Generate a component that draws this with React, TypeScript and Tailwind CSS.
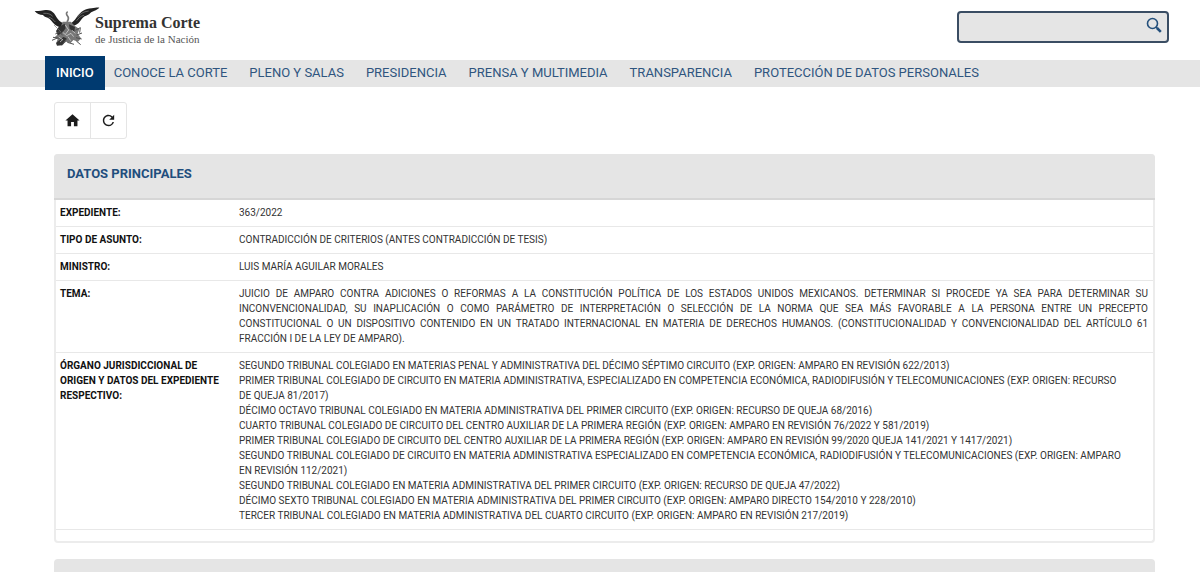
import { MdHome, MdRefresh } from 'react-icons/md';

const menu = [
  'INICIO',
  'CONOCE LA CORTE',
  'PLENO Y SALAS',
  'PRESIDENCIA',
  'PRENSA Y MULTIMEDIA',
  'TRANSPARENCIA',
  'PROTECCIÓN DE DATOS PERSONALES',
];

const tribunales = [
  'SEGUNDO TRIBUNAL COLEGIADO EN MATERIAS PENAL Y ADMINISTRATIVA DEL DÉCIMO SÉPTIMO CIRCUITO (EXP. ORIGEN: AMPARO EN REVISIÓN 622/2013)',
  'PRIMER TRIBUNAL COLEGIADO DE CIRCUITO EN MATERIA ADMINISTRATIVA, ESPECIALIZADO EN COMPETENCIA ECONÓMICA, RADIODIFUSIÓN Y TELECOMUNICACIONES (EXP. ORIGEN: RECURSO DE QUEJA 81/2017)',
  'DÉCIMO OCTAVO TRIBUNAL COLEGIADO EN MATERIA ADMINISTRATIVA DEL PRIMER CIRCUITO (EXP. ORIGEN: RECURSO DE QUEJA 68/2016)',
  'CUARTO TRIBUNAL COLEGIADO DE CIRCUITO DEL CENTRO AUXILIAR DE LA PRIMERA REGIÓN (EXP. ORIGEN: AMPARO EN REVISIÓN 76/2022 Y 581/2019)',
  'PRIMER TRIBUNAL COLEGIADO DE CIRCUITO DEL CENTRO AUXILIAR DE LA PRIMERA REGIÓN (EXP. ORIGEN: AMPARO EN REVISIÓN 99/2020 QUEJA 141/2021 Y 1417/2021)',
  'SEGUNDO TRIBUNAL COLEGIADO DE CIRCUITO EN MATERIA ADMINISTRATIVA ESPECIALIZADO EN COMPETENCIA ECONÓMICA, RADIODIFUSIÓN Y TELECOMUNICACIONES (EXP. ORIGEN: AMPARO EN REVISIÓN 112/2021)',
  'SEGUNDO TRIBUNAL COLEGIADO EN MATERIA ADMINISTRATIVA DEL PRIMER CIRCUITO (EXP. ORIGEN: RECURSO DE QUEJA 47/2022)',
  'DÉCIMO SEXTO TRIBUNAL COLEGIADO EN MATERIA ADMINISTRATIVA DEL PRIMER CIRCUITO (EXP. ORIGEN: AMPARO DIRECTO 154/2010 Y 228/2010)',
  'TERCER TRIBUNAL COLEGIADO EN MATERIA ADMINISTRATIVA DEL CUARTO CIRCUITO (EXP. ORIGEN: AMPARO EN REVISIÓN 217/2019)',
];

// The first lines of the topic break at fixed words
const tema = [
  'JUICIO DE AMPARO CONTRA ADICIONES O REFORMAS A LA CONSTITUCIÓN POLÍTICA DE LOS ESTADOS UNIDOS MEXICANOS. DETERMINAR SI PROCEDE YA SEA PARA DETERMINAR SU',
  'INCONVENCIONALIDAD, SU INAPLICACIÓN O COMO PARÁMETRO DE INTERPRETACIÓN O SELECCIÓN DE LA NORMA QUE SEA MÁS FAVORABLE A LA PERSONA ENTRE UN PRECEPTO',
  'CONSTITUCIONAL O UN DISPOSITIVO CONTENIDO EN UN TRATADO INTERNACIONAL EN MATERIA DE DERECHOS HUMANOS. (CONSTITUCIONALIDAD Y CONVENCIONALIDAD DEL ARTÍCULO 61',
  'FRACCIÓN I DE LA LEY DE AMPARO).',
];

const datos = [
  { label: 'EXPEDIENTE:', value: '363/2022' },
  { label: 'TIPO DE ASUNTO:', value: 'CONTRADICCIÓN DE CRITERIOS (ANTES CONTRADICCIÓN DE TESIS)' },
  { label: 'MINISTRO:', value: 'LUIS MARÍA AGUILAR MORALES' },
  {
    label: 'TEMA:',
    value: (
      <p>
        {tema.map((line) => (
          <span key={line} className="block text-justify not-last:[text-align-last:justify]">
            {line}{' '}
          </span>
        ))}
      </p>
    ),
  },
  {
    label: 'ÓRGANO JURISDICCIONAL DE ORIGEN Y DATOS DEL EXPEDIENTE RESPECTIVO:',
    value: (
      <ul className="pr-5">
        {tribunales.map((t) => (
          <li key={t}>{t}</li>
        ))}
      </ul>
    ),
  },
];

function Eagle() {
  return (
    <svg viewBox="12 16 198 126" className="h-[42px] w-[66px]" aria-hidden="true">
      {/* wings */}
      <g fill="#222">
        <path d="M14 34c9 0 17 1 27-2 13-3 24 0 31 9 6 8 9 17 16 22 5 4 10 6 16 9l-2 12c-9-2-20-2-27-9-9-8-13-17-22-21-6-2-11-3-14-8-10 0-19-4-25-12z" />
        <path d="M208 24c-9 9-20 9-27 16-5 6-11 7-17 10-8 5-12 14-19 21-7 6-16 8-25 12l-1-12c9-2 14-9 20-17 13-18 26-27 46-28 9 0 15-3 23-2z" />
      </g>
      <g fill="none" stroke="#8b8b8b" strokeWidth="2">
        <path d="M40 41c13-1 22 2 28 9M56 53c9 1 14 8 20 14M176 34c-16 2-26 8-34 19M162 47c-11 2-17 9-22 16" />
      </g>
      {/* neck and head */}
      <path fill="none" stroke="#777" strokeWidth="5" d="M113 36c-6 4-4 9 1 15 3 5 1 10-3 16" />
      {/* body, tail and claws */}
      <path fill="#777" d="M98 66l24 0 12 12 14 10-5 14 10 14-9 10-14-5-8 9-14-4-11 9-6-9-12 4 4-12-9-5 8-8-2-9 12-14z" />
      <path fill="#333" d="M78 94l8-12 18-10 3 14-11 14-12 7zM78 130l22-18 10 4-14 21-15 1zM117 74l18 8-2 14-14-8z" />
      <g fill="none" stroke="#505050" strokeWidth="3">
        <path d="M76 103l12-7 10 11M69 113l22 3M66 122l16-7M96 137l14-18M112 128l20 6M136 92l15-8-2 15M140 106l16-6M138 114l17 4M139 124l13 11" />
      </g>
      <g fill="none" stroke="#e2e2e2" strokeWidth="2">
        <path d="M106 76l10 15-9 12M98 98l12 10 13-7 8 10M86 112l12 8M114 111l8 12M126 92l10 9M90 127l9-8" />
      </g>
      <path fill="none" stroke="#777" strokeWidth="2" d="M72 76l22 22" />
    </svg>
  );
}

function Header() {
  return (
    <header className="flex h-[60px] items-start justify-between pr-[31px] pl-[34px]">
      <a href="#" className="flex pt-[5px]">
        <Eagle />
        <span className="-ml-[5px] flex flex-col pt-[9px] font-['Liberation_Serif',serif]">
          <span className="text-[16px] leading-[18px] font-bold text-[#333]">Suprema Corte</span>
          <span className="text-[11px] leading-[14px] text-[#555]">de Justicia de la Nación</span>
        </span>
      </a>
      <form className="mt-[11px] flex h-8 w-[212px] items-center rounded border-2 border-[#3a4d63] bg-[#e5e5e5]">
        <input type="text" aria-label="Buscar" className="h-full min-w-0 flex-1 bg-transparent px-2 text-[13px] outline-none" />
        <button type="button" aria-label="Buscar" className="mr-[5px] mb-1">
          <svg viewBox="0 0 16 16" className="h-4 w-4" fill="none" stroke="#24507c">
            <circle cx="6.5" cy="6.5" r="5" strokeWidth="1.6" />
            <path d="M10 10l1.6 1.6" strokeWidth="1.5" />
            <path d="M11 11l3.8 3.8" strokeWidth="2.6" />
          </svg>
        </button>
      </form>
    </header>
  );
}

function Menu() {
  return (
    <nav className="flex h-[27px] items-center bg-[#e5e5e5] pb-px pl-[45px] text-[13px] whitespace-nowrap">
      {menu.map((item, i) => (
        <a
          key={item}
          href="#"
          className={
            i === 0
              ? '-my-1 flex h-[34px] items-center bg-[#003a70] px-[11px] font-medium text-white'
              : 'px-[11px] text-[#2f557f] nth-2:pl-[9px]'
          }
        >
          {item}
        </a>
      ))}
    </nav>
  );
}

export default function App() {
  return (
    <div className="bg-white font-[Roboto,sans-serif]">
      <Header />
      <Menu />
      <main className="mr-[45px] ml-[54px] pt-[15px]">
        <div className="flex w-fit divide-x divide-[#e5e5e5] rounded-[3px] border border-[#e5e5e5] text-[#1c1c1c]">
          <button type="button" aria-label="Inicio" className="flex h-[35px] w-9 items-center justify-center">
            <MdHome size={17} />
          </button>
          <button type="button" aria-label="Actualizar" className="flex h-[35px] w-[35px] items-center justify-center">
            <MdRefresh size={17} />
          </button>
        </div>

        <section className="mt-[15px] rounded border-2 border-t-0 border-[#ececec] pb-[11px]">
          <h2 className="-mx-[2px] h-[46px] rounded-t border-b-2 border-[#d6d6d6] bg-[#e5e5e5] px-[13px] pt-[10px] text-[13px] leading-5 font-bold text-[#1f4e7d]">
            DATOS PRINCIPALES
          </h2>
          <table className="w-full text-[10px] leading-[15px] text-[#333]">
            <tbody>
              {datos.map(({ label, value }) => (
                <tr key={label} className="border-b border-[#e8e8e8] align-top">
                  <th scope="row" className="w-[179px] pt-[5px] pr-2 pb-[6px] pl-1 text-left font-bold text-[#111]">
                    {label}
                  </th>
                  <td className="pt-[5px] pr-[5px] pb-[6px] pl-1">{value}</td>
                </tr>
              ))}
            </tbody>
          </table>
        </section>

        <section className="mt-4 h-[14px] rounded-t bg-[#e5e5e5]" />
      </main>
    </div>
  );
}
